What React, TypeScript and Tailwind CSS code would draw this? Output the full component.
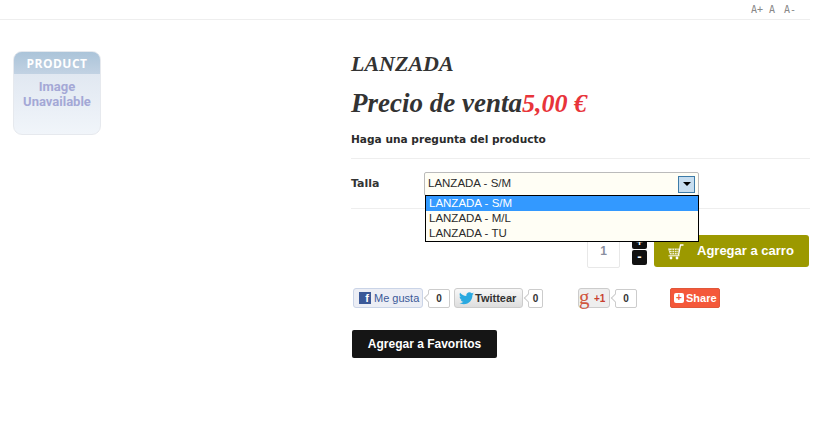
function ProductPlaceholder() {
  return (
    <div className="w-[88px] h-[84px] rounded-[9px] overflow-hidden flex flex-col items-center bg-gradient-to-b from-[#dbe3ee] to-[#f1f5fa] border border-[#e6e9ee]">
      <div className="w-full h-[22px] pt-[2px] bg-gradient-to-b from-[#abc4d9] to-[#c2d2e3] text-white font-['Open_Sans',sans-serif] text-[12px] font-bold text-center leading-[20px] tracking-[0.5px]">
        PRODUCT
      </div>
      <div className="mt-[5px] text-[#a4a8d6] font-['Roboto',sans-serif] text-[13px] font-bold leading-[15px] text-center">
        <div>Image</div>
        <div>Unavailable</div>
      </div>
    </div>
  );
}

function Counter({ value, w }: { value: string; w: string }) {
  return (
    <div className="relative ml-[5px]">
      <div className={`${w} h-[19px] border border-[#ccc] rounded-[2px] bg-white text-[#333] text-[10px] font-bold text-center leading-[17px]`}>
        {value}
      </div>
      <div className="absolute left-[-3px] top-[6px] w-[6px] h-[6px] rotate-45 bg-white border-l border-b border-[#ccc]"></div>
    </div>
  );
}

function CartIcon() {
  return (
    <svg width="16" height="17" viewBox="0 0 16 17" fill="none">
      <path d="M0 5.500h11l-1 6H2z" fill="#fff" opacity="0.85" />
      <path d="M1.500 7.500h9M2 9.500h8M4 5.500v6M6.500 5.500v6M9 5.500v6" stroke="#9c9900" strokeWidth="0.7" />
      <path d="M10.500 12.500l2-10.500h3" stroke="#fff" strokeWidth="1.300" />
      <path d="M0.500 12.800h11" stroke="#fff" strokeWidth="1" />
      <circle cx="3" cy="15" r="1.400" fill="#fff" />
      <circle cx="9" cy="15" r="1.400" fill="#fff" />
    </svg>
  );
}

export default function App() {
  return (
    <div className="w-[829px] h-[423px] bg-white overflow-hidden font-['Liberation_Sans',sans-serif] text-[#2b2b2b]">
      <div className="w-[810px] h-[20px] border-b border-[#eeeeee] flex justify-end items-start gap-[9px] pt-[4px] pr-[14px] font-['DejaVu_Sans_Mono',monospace] text-[10px] leading-[12px] text-[#888]">
        <span className="-mr-[3px]">A+</span>
        <span>A</span>
        <span>A-</span>
      </div>

      <div className="flex items-start pl-[13px] pt-[31px]">
        <ProductPlaceholder />

        <div className="w-[459px] ml-[250px] -mt-[1px]">
          <h1 className="font-['Liberation_Serif',serif] italic font-bold text-[22px] leading-[28px] text-[#333]">
            LANZADA
          </h1>
          <div className="font-['Liberation_Serif',serif] italic font-bold text-[27px] leading-[34px] mt-[8px] text-[#333]">
            Precio de venta<span className="text-[#e8343a] text-[26px]">5,00 €</span>
          </div>
          <div className="font-['DejaVu_Sans',sans-serif] font-bold text-[10.6px] leading-[14px] mt-[11px] pb-[12px] border-b border-[#eeeeee]">
            Haga una pregunta del producto
          </div>

          <div className="flex items-center h-[50px] border-b border-[#eeeeee]">
            <span className="w-[73px] font-['DejaVu_Sans',sans-serif] font-bold text-[11px] text-[#333] mt-[1px]">Talla</span>
            <div className="relative w-[275px] h-[24px] mt-[1px] border border-[#bbb] bg-[#fffef5] rounded-[2px] flex items-center justify-between pl-[3px] pr-[3px] text-[11.5px]">
              <span>LANZADA - S/M</span>
              <div className="w-[17px] h-[17px] border border-[#3d7ba8] bg-[#c7def0] flex items-center justify-center">
                <div className="w-0 h-0 border-x-[4px] border-x-transparent border-t-[4px] border-t-black"></div>
              </div>
              <div className="absolute left-0 top-[22px] w-[274px] border border-black bg-[#fffef5] text-[11.5px] leading-[15px] z-10">
                <div className="bg-[#3399ff] text-white pl-[3px]">LANZADA - S/M</div>
                <div className="pl-[3px]">LANZADA - M/L</div>
                <div className="pl-[3px]">LANZADA - TU</div>
              </div>
            </div>
          </div>

          <div className="flex justify-end items-start mt-[26px] pr-[1px]">
            <div className="w-[33px] h-[33px] border border-[#e8e8e8] rounded-[2px] text-[#8a8fa0] font-bold text-[12px] text-center leading-[31px] mr-[12px]">
              1
            </div>
            <div className="flex flex-col gap-[1px] mr-[7px] -mt-[1px]">
              <div className="w-[15px] h-[15px] bg-[#111] rounded-[2px] flex items-end justify-center text-white text-[12px] font-bold leading-[13px]">+</div>
              <div className="w-[15px] h-[15px] bg-[#111] rounded-[2px] text-white text-[13px] font-bold leading-[14px] text-center">-</div>
            </div>
            <div className="w-[155px] h-[32px] bg-[#9c9900] rounded-[3px] flex items-center pl-[14px] text-white font-bold text-[13px]">
              <CartIcon />
              <span className="ml-[13px]">Agregar a carro</span>
            </div>
          </div>

          <div className="flex items-center mt-[20px] pl-[2px]">
            <div className="w-[70px] h-[20px] border border-[#cad4e7] bg-[#eceef5] rounded-[3px] flex items-center pl-[5px] text-[#3b5998] text-[11px] whitespace-nowrap">
              <div className="w-[12px] h-[12px] bg-[#3b5998] text-white text-[11px] font-bold leading-[13px] text-right pr-[2px] mr-[3px]">f</div>
              Me gusta
            </div>
            <Counter value="0" w="w-[22px]" />
            <div className="w-[69px] h-[20px] ml-[4px] border border-[#ccc] bg-gradient-to-b from-[#f8f8f8] to-[#dedede] rounded-[3px] flex items-center pl-[4px] text-[#333] text-[11px] font-bold">
              <svg width="15" height="13" viewBox="0 0 24 20" className="shrink-0 mr-[1px]">
                <path fill="#2aa9e0" d="M24 2.400c-.9.4-1.800.7-2.800.8 1-.6 1.800-1.600 2.200-2.700-1 .6-2 1-3.100 1.200C19.300.7 18 0 16.600 0c-2.700 0-4.900 2.200-4.900 4.900 0 .4 0 .8.1 1.100C7.700 5.800 4.100 3.800 1.700.9c-.4.700-.7 1.600-.7 2.500 0 1.700.9 3.200 2.200 4.100-.8 0-1.600-.2-2.200-.6v.1c0 2.400 1.700 4.400 3.900 4.800-.4.100-.8.200-1.300.2-.3 0-.6 0-.9-.1.600 2 2.400 3.400 4.600 3.400-1.700 1.300-3.800 2.100-6.100 2.100-.4 0-.8 0-1.200-.1C2.200 18.300 4.800 19 7.500 19c9.100 0 14-7.500 14-14v-.6c1-.7 1.800-1.600 2.500-2z" />
              </svg>
              Twittear
            </div>
            <Counter value="0" w="w-[15px]" />

            <div className="w-[32px] h-[20px] ml-[35px] border border-[#ccc] bg-[#eeeeee] rounded-[3px] flex items-center text-[#c8402e] text-[10px] font-bold">
              <span className="font-['Liberation_Serif',serif] text-[21px] font-normal text-[#d0573f] leading-[16px] w-[12px] mr-[3px] -mt-[3px]">g</span>
              +1
            </div>
            <Counter value="0" w="w-[22px]" />
            <div className="w-[50px] h-[20px] ml-[33px] bg-[#f4583a] border border-[#e0573a] rounded-[2px] flex items-center pl-[3px] text-white text-[11px] font-bold">
              <div className="w-[10px] h-[10px] bg-white rounded-[2px] text-[#f4583a] text-[10px] leading-[9px] text-center mr-[2px]">+</div>
              Share
            </div>
          </div>

          <div className="w-[145px] h-[28px] mt-[22px] ml-[1px] bg-[#151515] rounded-[2px] text-white font-bold text-[12px] flex items-center justify-center">
            Agregar a Favoritos
          </div>
        </div>
      </div>
    </div>
  );
}
